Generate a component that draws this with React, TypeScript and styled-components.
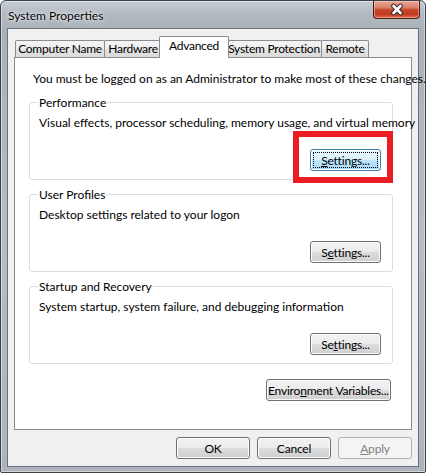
import React from "react";
import styled, { createGlobalStyle, css } from "styled-components";

const Global = createGlobalStyle`
  html, body { margin: 0; padding: 0; background: #ffffff; }
  body {
    font-family: Lato, "Liberation Sans", Arial, sans-serif;
    font-size: 12px;
    color: #000;
  }
  * { box-sizing: border-box; }
`;

const Window = styled.div`
  width: 426px;
  height: 473px;
  border: 1px solid #3b4249;
  border-radius: 6px 6px 2px 2px;
  background: linear-gradient(180deg, #c6ccd2 0px, #b1b9c0 14px, #a9b1b9 28px, #b6bdc4 50%, #adb4bb 100%);
  box-shadow: inset 0 0 0 1px rgba(255, 255, 255, 0.45);
  padding: 0 6px 5px;
  display: flex;
  flex-direction: column;
`;

const TitleBar = styled.div`
  height: 27px;
  display: flex;
  align-items: flex-start;
  justify-content: space-between;
  padding-left: 1px;
`;

const Title = styled.div`
  line-height: 15px;
  margin-top: 7px;
  color: #000;
  text-shadow: 0 0 6px rgba(255, 255, 255, 0.9), 0 0 2px rgba(255, 255, 255, 0.9);
`;

const CloseButton = styled.div`
  width: 47px;
  height: 18px;
  margin-right: -1px;
  border: 1px solid #4a1b12;
  border-top: none;
  border-radius: 0 0 4px 4px;
  background: linear-gradient(180deg, #e9a898 0%, #d77e69 40%, #c4442a 52%, #c23a20 78%, #e26a4c 100%);
  box-shadow: inset 0 0 0 1px rgba(255, 220, 210, 0.45);
  display: flex;
  align-items: center;
  justify-content: center;
`;

const Client = styled.div`
  flex: 1;
  border: 1px solid #6a7178;
  background: #f0f0f0;
  display: flex;
  flex-direction: column;
  padding-top: 7px;
`;

const TabStrip = styled.div`
  display: flex;
  align-items: flex-end;
  padding-left: 8px;
  margin-bottom: -1px;
  position: relative;
  z-index: 1;
`;

const Tab = styled.div<{ $w: number; $active?: boolean }>`
  width: ${(p) => p.$w}px;
  height: 17px;
  margin-bottom: 1px;
  margin-left: -1px;
  padding: 0;
  border: 1px solid #898c95;
  border-bottom: none;
  border-radius: 2px 2px 0 0;
  background: linear-gradient(180deg, #f4f4f4 0%, #ececec 50%, #e2e2e2 51%, #dcdcdc 100%);
  line-height: 15px;
  letter-spacing: -0.25px;
  text-align: center;
  white-space: nowrap;
  ${(p) =>
    p.$active &&
    css`
      height: 22px;
      margin: 0 -2px 0 -3px;
      background: #ffffff;
      line-height: 17px;
      position: relative;
      z-index: 1;
    `}
`;

const Panel = styled.div`
  margin: 0 6px;
  height: 373px;
  border: 1px solid #898c95;
  background: #ffffff;
  padding: 13px 18px 0 14px;
  display: flex;
  flex-direction: column;
`;

const Intro = styled.div`
  line-height: 15px;
  padding-left: 4px;
  white-space: nowrap;
`;

const Group = styled.fieldset<{ $gap: number }>`
  margin: ${(p) => p.$gap}px 0 0;
  padding: 5px 11px 8px 9px;
  border: 1px solid #d5dfe5;
  border-radius: 3px;
  min-inline-size: auto;
`;

const Legend = styled.legend`
  padding: 0 1px;
  margin-left: -1px;
  line-height: 15px;
`;

const Description = styled.div`
  line-height: 15px;
  white-space: nowrap;
`;

const ButtonRow = styled.div<{ $top: number; $right?: number }>`
  display: flex;
  justify-content: flex-end;
  margin-top: ${(p) => p.$top}px;
  padding-right: ${(p) => p.$right ?? 0}px;
`;

const Button = styled.button<{ $w: number; $focused?: boolean }>`
  width: ${(p) => p.$w}px;
  height: 22px;
  padding: 0;
  font: inherit;
  font-size: 12px;
  letter-spacing: -0.2px;
  white-space: nowrap;
  color: #000;
  border: 1px solid #707070;
  border-radius: 3px;
  background: linear-gradient(180deg, #f2f2f2 0%, #ebebeb 50%, #dddddd 51%, #cfcfcf 100%);
  box-shadow: inset 0 0 0 1px #fcfcfc;
  display: flex;
  align-items: center;
  justify-content: center;
  ${(p) =>
    p.$focused &&
    css`
      border-color: #3c7fb1;
      background: linear-gradient(180deg, #eaf6fd 0%, #d9f0fc 50%, #bee6fd 51%, #a7d9f5 100%);
      outline: 1px dotted #000;
      outline-offset: -4px;
    `}
  &:disabled {
    color: #838383;
    border-color: #adb2b5;
    background: #f4f4f4;
    box-shadow: none;
  }
`;

const Highlight = styled.span`
  position: relative;
  display: inline-flex;
`;

const RedBox = styled.span`
  position: absolute;
  left: -17px;
  top: -18px;
  width: 100px;
  height: 52px;
  border: 6px solid #ec1c24;
  pointer-events: none;
`;

const Footer = styled.div`
  margin-top: 7px;
  display: flex;
  justify-content: flex-end;
  gap: 7px;
  padding-right: 6px;
`;

const CloseGlyph = () => (
  <svg width="14" height="13" viewBox="0 0 14 13">
    <path d="M3.5 3 L10.5 10 M10.5 3 L3.5 10" stroke="#3a2a28" strokeWidth="4.6" strokeLinecap="round" fill="none" />
    <path d="M3.5 3 L10.5 10 M10.5 3 L3.5 10" stroke="#ffffff" strokeWidth="2.6" strokeLinecap="round" fill="none" />
  </svg>
);

type GroupProps = {
  legend: string;
  text: string;
  gap: number;
  settingsLabel: React.ReactNode;
  highlighted?: boolean;
};

const SettingsGroup = ({ legend, text, gap, settingsLabel, highlighted }: GroupProps) => (
  <Group $gap={gap}>
    <Legend>{legend}</Legend>
    <Description>{text}</Description>
    <ButtonRow $top={19}>
      {highlighted ? (
        <Highlight>
          <Button $w={71} $focused>
            {settingsLabel}
          </Button>
          <RedBox />
        </Highlight>
      ) : (
        <Button $w={71}>{settingsLabel}</Button>
      )}
    </ButtonRow>
  </Group>
);

const tabs = [
  { label: "Computer Name", w: 90 },
  { label: "Hardware", w: 58 },
  { label: "Advanced", w: 70, active: true },
  { label: "System Protection", w: 96 },
  { label: "Remote", w: 48 },
];

export default function App() {
  return (
    <>
      <Global />
      <Window>
        <TitleBar>
          <Title>System Properties</Title>
          <CloseButton>
            <CloseGlyph />
          </CloseButton>
        </TitleBar>
        <Client>
          <TabStrip>
            {tabs.map((t) => (
              <Tab key={t.label} $w={t.w} $active={t.active}>
                {t.label}
              </Tab>
            ))}
          </TabStrip>
          <Panel>
            <Intro>You must be logged on as an Administrator to make most of these changes.</Intro>
            <SettingsGroup
              gap={9}
              legend="Performance"
              text="Visual effects, processor scheduling, memory usage, and virtual memory"
              settingsLabel={
                <span>
                  <u>S</u>ettings...
                </span>
              }
              highlighted
            />
            <SettingsGroup
              gap={7}
              legend="User Profiles"
              text="Desktop settings related to your logon"
              settingsLabel={
                <span>
                  S<u>e</u>ttings...
                </span>
              }
            />
            <SettingsGroup
              gap={7}
              legend="Startup and Recovery"
              text="System startup, system failure, and debugging information"
              settingsLabel={
                <span>
                  Se<u>t</u>tings...
                </span>
              }
            />
            <ButtonRow $top={15} $right={2}>
              <Button $w={125}>
                <span>
                  Enviro<u>n</u>ment Variables...
                </span>
              </Button>
            </ButtonRow>
          </Panel>
          <Footer>
            <Button $w={74}>OK</Button>
            <Button $w={74}>Cancel</Button>
            <Button $w={74} disabled>
              <span>
                <u>A</u>pply
              </span>
            </Button>
          </Footer>
        </Client>
      </Window>
    </>
  );
}
